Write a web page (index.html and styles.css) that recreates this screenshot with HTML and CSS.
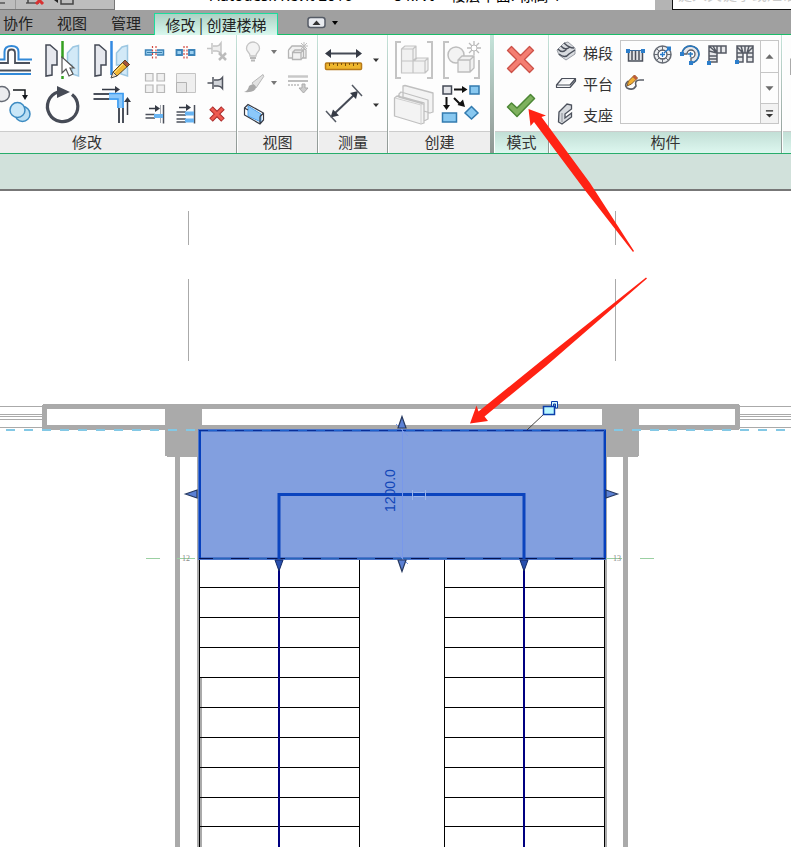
FILE: index.html
```
<!DOCTYPE html>
<html lang="zh-CN">
<head>
<meta charset="utf-8">
<title>Autodesk Revit 2016</title>
<link rel="stylesheet" href="styles.css">
</head>
<body>
<div class="app">
  <header class="titlebar">
    <div class="quick">
      <svg width="114" height="10" viewBox="0 0 114 10" aria-hidden="true">
        <path d="M0 3H5M26 3H39" stroke="#555" stroke-width="1.5"/><path d="M15.500 0V9" stroke="#999"/>
        <path d="M28 0V3M61 0V4H73V0" fill="none" stroke="#444" stroke-width="1.500"/>
        <path d="M36 4L43 -3M36 -3L43 4" stroke="#d83232" stroke-width="3"/>
        <path d="M54 0L58 3V-3Z" fill="#222"/>
      </svg>
    </div>
    <div class="caption"><span>Autodesk Revit 2016 -</span><span>84.rvt -</span><span>楼层平面: 标高 1</span></div>
    <div class="search"><span>键入关键字或短语</span></div>
  </header>

  <nav class="tabs">
    <button class="tab">协作</button>
    <button class="tab">视图</button>
    <button class="tab">管理</button>
    <button class="tab active">修改 | 创建楼梯</button>
    <button class="collapse" aria-label="最小化功能区">
      <svg width="32" height="14" viewBox="0 0 32 14"><rect x="1" y="1.500" width="17" height="10" rx="2.500" fill="#e9ebf0" stroke="#555b66" stroke-width="1.500"/><path d="M5.500 9L9.500 4.500L13.500 9Z" fill="#333"/><path d="M25 5H31L28 9Z" fill="#000"/></svg>
    </button>
  </nav>

  <div class="ribbon">
    <section class="panel modify">
      <div class="body">
        <div class="grid modify-large">
          <button aria-label="偏移"><svg viewBox="0 37 38 46"><g fill="none" stroke-width="2"><path d="M0 59.500H4.500V52Q4.500 46 11.500 46T18.500 52V59.500H32M0 74H31" stroke="#3289d8"/><path d="M0 63H8V53Q8 49.500 11.500 49.500T15 53V63H30M0 70.500H31" stroke="#4b505b" stroke-width="1.800"/></g></svg></button>
          <button aria-label="镜像 - 拾取轴"><svg viewBox="38 37 49 46"><path d="M46 45H50L57 51V65H52V75L46 76Z" fill="#e6e8ee" stroke="#444955" stroke-width="1.500"/><path d="M78.500 45.500L73 47L67.500 53V65H72V74L78.500 76Z" fill="#d2e9f7" stroke="#9cc7e2" stroke-width="1.500"/><path d="M62.500 41V58M62.500 76V79" stroke="#35a020" stroke-width="2.500"/><path d="M62 57V73L66 69L69 76L73 74L70 68H74Z" fill="#fff" stroke="#555" stroke-width="1.200"/></svg></button>
          <button aria-label="镜像 - 绘制轴"><svg viewBox="87 37 49 46"><path d="M95 45H99L106 51V65H101V75L95 76Z" fill="#e6e8ee" stroke="#444955" stroke-width="1.500"/><path d="M127.500 45.500L122 47L116.500 53V65H121V74L127.500 76Z" fill="#d2e9f7" stroke="#9cc7e2" stroke-width="1.500"/><path d="M111.500 41V75" stroke="#3289e2" stroke-width="2.500"/><path d="M113 72L125 60L129.500 64.500L117 76Z" fill="#f2b733" stroke="#5b4628"/><path d="M114 73L125 62" stroke="#fadf8c"/><path d="M125 60L129.500 64.500L127 67L122.500 62.500Z" fill="#a5523a" stroke="#5b4628"/><path d="M111 78L113 72L117 76Z" fill="#f4dfc0" stroke="#4b4b4b"/></svg></button>
          <button aria-label="复制"><svg viewBox="0 83 38 46"><circle cx="2" cy="94" r="7.500" fill="#ebecef" stroke="#666b75" stroke-width="1.500"/><path d="M13 90H25V95" fill="none" stroke="#15181d" stroke-width="1.500"/><path d="M22 95H28L25 100Z" fill="#15181d"/><circle cx="22.500" cy="114" r="7.500" fill="#b9def3" stroke="#3c8bc2" stroke-width="1.500"/><circle cx="17.500" cy="110" r="7.500" fill="#c9e7f8" stroke="#3c8bc2" stroke-width="1.500"/></svg></button>
          <button aria-label="旋转"><svg viewBox="38 83 49 46"><path d="M58 92A15.200 15.200 0 1 0 72 94.500" fill="none" stroke="#464b56" stroke-width="3.200"/><path d="M57 86L70 92L57 98Z" fill="#464b56"/></svg></button>
          <button aria-label="修剪/延伸为角"><svg viewBox="87 83 49 46"><path d="M93.500 94H110M93.500 99H110M119 107V123M123 107V123" stroke="#4b505b" stroke-width="2"/><path d="M109 96.500H120.500V108" fill="none" stroke="#8cc8fa" stroke-width="7"/><path d="M109 93.500H123V108M109 99H118V108" fill="none" stroke="#3d9aef" stroke-width="1.500"/><path d="M102 89.500H117M127.500 115V101" stroke="#353a45" stroke-width="1.500"/><path d="M115 86L120 89.500L115 93ZM124 102L127.500 97L131 102Z" fill="#353a45"/></svg></button>
        </div>
        <div class="grid modify-small">
          <button aria-label="拆分图元"><svg viewBox="139 37 31 31"><path d="M145.500 50H163.500V55H145.500Z" fill="#9dd0f0" stroke="#3b83b8" stroke-width="1.500"/><path d="M154.500 45V60" stroke="#fff" stroke-width="5"/><path d="M147 52.500H162" stroke="#397da9"/><path d="M152.500 46V59M156 46V59" stroke="#d24a40" stroke-width="1.200" stroke-dasharray="2 1.500"/></svg></button>
          <button aria-label="用间隙拆分"><svg viewBox="170 37 31 31"><path d="M176.500 50H182V55H176.500ZM189 50H194.500V55H189Z" fill="#9dd0f0" stroke="#3b83b8" stroke-width="1.800"/><path d="M184 46V59M187 46V59" stroke="#d24a40" stroke-width="1.200" stroke-dasharray="2 1.500"/></svg></button>
          <button aria-label="解锁" disabled><svg viewBox="201 37 31 31"><path d="M207 48.500H212M212 43V54M213 46H217Q219 46 221 43V54Q219 51 217 51H213" fill="#eee" stroke="#c4c4c4" stroke-width="1.500"/><path d="M219 53L226 60M226 53L219 60" stroke="#bbb" stroke-width="2.500"/></svg></button>
          <button aria-label="阵列" disabled><svg viewBox="139 68 31 31"><path d="M145.500 73.500H153V81H145.500ZM157 73.500H164.500V81H157ZM145.500 85H153V92.500H145.500ZM157 85H164.500V92.500H157Z" fill="#f0f0f0" stroke="#b8b8b8" stroke-width="1.200"/></svg></button>
          <button aria-label="缩放" disabled><svg viewBox="170 68 31 31"><path d="M176.500 73.500H195.500V92.500H176.500Z" fill="#efefef" stroke="#c4c4c4"/><path d="M176.500 82.500H186.500V92.500H176.500Z" fill="#e7e7e7" stroke="#b3b3b3"/></svg></button>
          <button aria-label="锁定"><svg viewBox="201 68 31 31"><path d="M207.500 83H213M213 77V89M214 80H218Q220.500 80 222.500 77.500V88.500Q220.500 86 218 86H214" fill="#d2d5da" stroke="#50545e" stroke-width="1.500"/></svg></button>
          <button aria-label="修剪/延伸单个图元"><svg viewBox="139 99 31 31"><path d="M145.500 114.500H155M145.500 118H155M163.500 105V123.500" stroke="#4b505b" stroke-width="1.500"/><path d="M160.500 105V123" stroke="#a5a9b0"/><path d="M154 116H163" stroke="#68b4f2" stroke-width="4"/><path d="M149 108.500H157" stroke="#353a45" stroke-width="1.500"/><path d="M155 105L160 108.500L155 112Z" fill="#353a45"/></svg></button>
          <button aria-label="修剪/延伸多个图元"><svg viewBox="170 99 31 31"><path d="M176.500 112H186M176.500 115H186M176.500 119H186M176.500 122H186M194.500 105V123.500" stroke="#4b505b" stroke-width="1.500"/><path d="M185 113.500H194M185 120.500H194" stroke="#68b4f2" stroke-width="4"/><path d="M179 107.500H188" stroke="#353a45" stroke-width="1.500"/><path d="M186 104L191 107.500L186 111Z" fill="#353a45"/></svg></button>
          <button aria-label="删除"><svg viewBox="201 99 31 31"><path d="M211 108L223 120M223 108L211 120" stroke="#a92929" stroke-width="5"/><path d="M211.500 108.500L222.500 119.500M222.500 108.500L211.500 119.500" stroke="#ee5a50" stroke-width="3"/></svg></button>
        </div>
      </div>
      <h2>修改</h2>
    </section>
    <div class="sep"></div>

    <section class="panel view">
      <div class="body">
        <div class="grid view-grid">
          <button aria-label="隐藏" disabled><svg viewBox="238 37 28 31"><path d="M250 56C250 52 246.500 52 246.500 48.500A6.500 6.500 0 0 1 259.500 48.500C259.500 52 256 52 256 56Z" fill="#f3f3f3" stroke="#c5c5c5" stroke-width="1.300"/><path d="M250 58H256M251 60.500H255" stroke="#b8b8b8" stroke-width="2"/></svg></button>
          <button aria-label="隐藏选项" class="drop" disabled><svg viewBox="266 37 16 31"><path d="M271 50H277L274 54Z" fill="#777"/></svg></button>
          <button aria-label="置换" disabled><svg viewBox="282 37 35 31"><path d="M288.500 50L292 46H301L306 50V58H302M288.500 50V58H292M292.500 52.500H301V59.500H292.500ZM292.500 52.500L295 50H303.500L301 52.500M303.500 50V57L301 59.500" fill="#f2f2f2" stroke="#b5b5b5" stroke-width="1.300"/><path d="M304 42V50M300 46H308M301 43L307 49M307 43L301 49" stroke="#bdbdbd"/></svg></button>
          <button aria-label="替换视图中的图形" disabled><svg viewBox="238 68 28 31"><path d="M252 83L263 74.500Q265 76 262 79L256 88Z" fill="#e2e2e2" stroke="#b8b8b8"/><path d="M244 92Q248 91 249 86Q254 82 256 87Q256 93 244 92Z" fill="#a9a9a9"/></svg></button>
          <button aria-label="替换选项" class="drop" disabled><svg viewBox="266 68 16 31"><path d="M271 81H277L274 85Z" fill="#777"/></svg></button>
          <button aria-label="线处理" disabled><svg viewBox="282 68 35 31"><path d="M288 76.500H308" stroke="#c8c8c8" stroke-width="2.500"/><path d="M288 81H308" stroke="#a8a8a8" stroke-width="1.500"/><path d="M288 85H300" stroke="#999" stroke-dasharray="2 1"/><path d="M302 84H305V88H308L303.500 93L299 88H302Z" fill="#ccc" stroke="#aaa"/></svg></button>
          <button aria-label="选择框"><svg viewBox="238 99 28 31"><path d="M248 106L261 114V122L248 116Z" fill="#8cc8fa" stroke="#4fa2ec"/><path d="M244.500 108L248 104.500L263.500 113V120L260 124L244.500 115ZM260 116.500V124M260 116.500L263.500 113M244.500 108L248 110" fill="none" stroke="#343944" stroke-width="1.200"/></svg></button>
        </div>
      </div>
      <h2>视图</h2>
    </section>
    <div class="sep"></div>

    <section class="panel measure">
      <div class="body">
        <div class="grid measure-grid">
          <button aria-label="测量"><svg viewBox="319 37 49 46"><path d="M329 53.500H358" stroke="#454a55" stroke-width="2"/><path d="M325 53.500L331 49V58ZM362 53.500L356 49V58Z" fill="#353a45"/><rect x="325.500" y="63" width="36" height="6.500" rx="1" fill="#efb62d" stroke="#b77a1a" stroke-width="1.500"/><path d="M329.500 63V66M333.500 63V65M337.500 63V66M341.500 63V65M345.500 63V66M349.500 63V65M353.500 63V66M357.500 63V65" stroke="#78500c"/></svg></button>
          <button aria-label="测量选项" class="drop"><svg viewBox="368 37 19 46"><path d="M373 58.500H379L376 62Z" fill="#333"/></svg></button>
          <button aria-label="对齐尺寸标注"><svg viewBox="319 83 49 46"><path d="M334 114L354 95" stroke="#454a55" stroke-width="2"/><path d="M330.500 117.500L333 109.500L339 115.500ZM358 91L350 93L356 99Z" fill="#353a45"/><path d="M326 111L336 122M352 85L362 96" stroke="#555a64" stroke-width="1.500"/></svg></button>
          <button aria-label="标注选项" class="drop"><svg viewBox="368 83 19 46"><path d="M373 103.500H379L376 107Z" fill="#333"/></svg></button>
        </div>
      </div>
      <h2>测量</h2>
    </section>
    <div class="sep"></div>

    <section class="panel create">
      <div class="body">
        <div class="grid create-grid">
          <button aria-label="创建组" disabled><svg viewBox="389 37 49 46"><path d="M401 42H396V78H401M427 42H432V78H427" fill="none" stroke="#c4c4c4" stroke-width="2"/><path d="M401.500 61V49L405 46H416V58L413 61H425V61L428 58L417 58L414 61M401.500 61V73H425V61ZM401.500 49H413V61M413 49L416 46M413 61V73M425 61L428 58V70L425 73" fill="#f1f1f1" stroke="#c4c4c4" stroke-width="1.200" stroke-linejoin="round"/></svg></button>
          <button aria-label="创建零件" disabled><svg viewBox="438 37 52 46"><path d="M449 42H444V78H449M474 78H479V60" fill="none" stroke="#c4c4c4" stroke-width="2"/><circle cx="456" cy="55" r="8" fill="#f3f3f3" stroke="#bdbdbd" stroke-width="1.500"/><path d="M458 60L462 56H474V68L470 72H458ZM458 60H470V72M470 60L474 56" fill="#f1f1f1" stroke="#bdbdbd" stroke-width="1.300"/><path d="M474 41V55M467 48H481M469 43L479 53M479 43L469 53" stroke="#bababa" stroke-width="1.300"/><circle cx="474" cy="48" r="3" fill="#fff" stroke="#bbb"/></svg></button>
          <button aria-label="创建类似" disabled><svg viewBox="389 83 49 46"><path d="M403 89V86L405 85.500L433 93V112L430 113L424 111V103L403 97ZM399 94L401 92L428 100V119L424 121V104L399 97ZM394.500 98L397 96L424 103V123L421 124L394.500 116Z" fill="#f3f3f3" stroke="#c0c0c0" stroke-width="1.300" stroke-linejoin="round"/><path d="M395 98L421 105V123M421 105L424 103" fill="none" stroke="#d0d0d0"/></svg></button>
          <button aria-label="创建部件"><svg viewBox="438 83 52 46"><path d="M443 86H451.500V94H443Z" fill="#e3e4e8" stroke="#444955" stroke-width="1.500"/><path d="M470 86H479V94H470ZM442.500 113H456.500V122H442.500ZM471.500 106.500L478 113L471.500 119L465 113Z" fill="#88c8f0" stroke="#337baf" stroke-width="1.500"/><path d="M454 89.500H464M446.500 97V106M454 98L460 104" stroke="#111" stroke-width="2"/><path d="M462 86L467.500 89.500L462 93ZM443 105H450L446.500 110ZM465 107L457.500 105L463 99.500Z" fill="#111"/></svg></button>
        </div>
      </div>
      <h2>创建</h2>
    </section>
    <div class="sep wide"></div>

    <section class="panel mode context">
      <div class="body">
        <div class="grid mode-grid">
          <button aria-label="取消编辑模式"><svg viewBox="495 37 53 46"><path d="M507.500 50.500L511.500 46.500L520.500 55.500L529.500 46.500L533.500 50.500L524.500 59.500L533.500 68.500L529.500 72.500L520.500 63.500L511.500 72.500L507.500 68.500L516.500 59.500Z" fill="#f47e72" stroke="#cc5148" stroke-width="1.300" stroke-linejoin="round"/></svg></button>
          <button aria-label="完成编辑模式"><svg viewBox="495 83 53 46"><path d="M507.500 107L511.500 103L517 108L530.500 94.500L534.500 98.500L517 116.500Z" fill="#7fb15e" stroke="#4c8735" stroke-width="1.500" stroke-linejoin="round"/></svg></button>
        </div>
      </div>
      <h2>模式</h2>
    </section>
    <div class="sep"></div>

    <section class="panel component context">
      <div class="body">
        <div class="parts">
          <button class="part"><svg viewBox="555 37 23 31"><path d="M564 43L568 42L575 48V54L566 60L559 55L557 50L560 47Z" fill="#d9dce0" stroke="#9a9ea5"/><path d="M558 49Q562 54 567 49M561 46Q565 51 570 47M564 43Q569 48 574 48M559 54Q565 59 569 54L575 50" fill="none" stroke="#4b505b" stroke-width="1.400"/></svg><span>梯段</span></button>
          <button class="part"><svg viewBox="555 68 23 31"><path d="M556.500 85L562 78.500H575.500V81L570 87.500H556.500ZM556.500 85H570L575.500 78.500" fill="#f3f4f6" stroke="#4b505b" stroke-width="1.200" stroke-linejoin="round"/></svg><span>平台</span></button>
          <button class="part"><svg viewBox="555 99 23 31"><path d="M559 112L567 104L571.500 105V109L565 114V118L571.500 113V117L562 124L558.500 122Z" fill="#d7dade" stroke="#4b505b" stroke-width="1.300"/><path d="M562 113V122" fill="none" stroke="#8a8e95"/></svg><span>支座</span></button>
        </div>
        <div class="gallery">
          <div class="shapes">
            <button aria-label="直梯"><svg viewBox="621 41 27 29"><path d="M628.500 50V61H642.500V50M632 51V60M635.500 51V60M639 51V60" fill="#e3e5e8" stroke="#4b505b" stroke-width="1.500"/><path d="M628 50.500H643" stroke="#3a6c9e"/><path d="M626 49H630V53H626ZM641 49H645V53H641Z" fill="#2c7ecb"/></svg></button>
            <button aria-label="全踏步螺旋"><svg viewBox="648 41 27 29"><circle cx="662.500" cy="54.500" r="8.500" fill="#eceef0" stroke="#666b74" stroke-width="1.500"/><circle cx="662.500" cy="54.500" r="4.500" fill="#fff" stroke="#555a64" stroke-width="1.300"/><path d="M662.500 46V51M662.500 58V63M654 54.500H658M667 54.500H671M656.500 48.500L659.500 51.500M656.500 60.500L659.500 57.500M668.500 60.500L665.500 57.500" stroke="#666b74"/><path d="M662.500 52V57M660 54.500H665M664 53L669 48.500" stroke="#267ac9" stroke-width="1.300"/><path d="M667 46.500H671V50.500H667Z" fill="#2c7ecb"/></svg></button>
            <button aria-label="圆心-端点螺旋"><svg viewBox="675 41 27 29"><path d="M682 54A8.500 8.500 0 1 1 691 63V58A4 4 0 1 0 687 54Z" fill="#e4e6ea" stroke="#555a64" stroke-width="1.300"/><path d="M682 54Q683 46 690.500 46Q699 47 699 54.500Q698 62 691 63M688 54H693M690.500 52V57" fill="none" stroke="#2777bd" stroke-width="1.500"/><path d="M680 52H684V56H680ZM689 61H693V65H689Z" fill="#2c7ecb"/></svg></button>
            <button aria-label="L 形转角"><svg viewBox="702 41 27 29"><path d="M709 46H726V53H717V62H709ZM717 53L709 46M713 46L717 53M717 46V53M721 46V53M709 51L717 53M709 56H717M709 59H717" fill="#e7e8eb" stroke="#555a64" stroke-width="1.500"/><path d="M707 61H711V65H707Z" fill="#2c7ecb"/></svg></button>
            <button aria-label="U 形转角"><svg viewBox="729 41 30 29"><path d="M737 46H753V62H747V53H743V62H737ZM743 53L737 47M747 53L753 47M745 46V53M737 53H743M737 57H743M747 53H753M747 57H753M741 46L743 53M749 46L747 53" fill="#e7e8eb" stroke="#555a64" stroke-width="1.500"/><path d="M735 60H739V64H735Z" fill="#2c7ecb"/></svg></button>
            <button aria-label="创建草图"><svg viewBox="621 70 27 29"><path d="M628 81Q624 85 627 88Q633 91 636 86Q634 80 640 80H644" fill="none" stroke="#5b5f68" stroke-width="1.600"/><path d="M627 86L628.500 81L634.500 75L637.500 78L631.500 84Z" fill="#f2af32" stroke="#8a5c24"/><path d="M634.500 75L637.500 78L636 80L632.500 77Z" fill="#bc5a3d"/></svg></button>
          </div>
          <div class="scroll">
            <button aria-label="上一行"><svg viewBox="0 0 19 10"><path d="M5 7H14L9.500 2Z" fill="#6c6c6c"/></svg></button>
            <button aria-label="下一行"><svg viewBox="0 0 19 10"><path d="M5 3H14L9.500 8Z" fill="#6c6c6c"/></svg></button>
            <button aria-label="展开"><svg viewBox="0 0 19 10"><path d="M5.500 1.500H13.500" stroke="#333" stroke-width="1.500"/><path d="M5.500 5H13.500L9.500 9Z" fill="#333"/></svg></button>
          </div>
        </div>
      </div>
      <h2>构件</h2>
    </section>
    <div class="sep"></div>
    <section class="panel rest context">
      <div class="body"><svg class="edge" viewBox="783 37 8 46"><path d="M791 58.500V75" stroke="#aaa" stroke-width="2"/></svg></div>
      <h2></h2>
    </section>
  </div>

  <div class="options"></div>

  <main class="canvas">
    <svg class="plan" viewBox="0 191 791 656" preserveAspectRatio="xMinYMin slice" role="img" aria-label="楼梯平面">
      <g shape-rendering="crispEdges">
        <path d="M188.500 211V245M188.500 279V361M615.500 211V245M615.500 279V361" stroke="#aaa"/>
        <path d="M0 406.500H42M0 414.500H42M0 416.500H42M0 419.500H42M0 427.500H42M740 406.500H791M740 414.500H791M740 416.500H791M740 419.500H791M740 427.500H791" stroke="#aaa"/>
        <g fill="#aaa">
          <path fill-rule="evenodd" d="M43 404H739V405H740V429H739V430H43V429H42V405H43ZM47 409V425H735V409Z"/>
          <path d="M165 404H202V457H167V456H165ZM602 404H639V455L637 457H602Z"/>
          <path d="M175 457H180V847H175ZM197 457H199V847H197ZM200 677H202V847H200ZM605 457H607V847H605ZM623 457H628V847H623Z"/>
        </g>
        <path d="M6 430H198M614 430H791" stroke="#83c8e5" stroke-width="2" stroke-dasharray="9 9"/>
        <path d="M146 558.500H160M177 558.500H195M605 558.500H622M640 558.500H654" stroke="#9bd0a2"/>
        <g fill="none" stroke="#000">
          <path d="M199.500 560V847M359.500 560V847M444.500 560V847M604.500 560V847"/>
          <path d="M199 587.500H360M199 617.500H360M199 647.500H360M199 677.500H360M199 707.500H360M199 737.500H360M199 767.500H360M199 797.500H360M199 826.500H360"/>
          <path d="M444 587.500H605M444 617.500H605M444 647.500H605M444 677.500H605M444 707.500H605M444 737.500H605M444 767.500H605M444 797.500H605M444 826.500H605"/>
        </g>
        <path d="M279 560V847M524 560V847" stroke="#000080" stroke-width="2"/>
        <rect x="198" y="429" width="408" height="131" fill="#4d75cb"/>
        <rect x="201" y="432" width="402" height="125" fill="#829fdf"/>
        <path d="M199.500 430V559M604.500 430V559" fill="none" stroke="#0640bd" stroke-width="2"/>
        <path d="M199 430.500H605" stroke="#1d62cf"/>
        <path d="M199 430.500H605" stroke="#062e9a" stroke-dasharray="9 9"/>
        <path d="M199 558.500H605" stroke="#2865b9"/>
        <path d="M199 558.500H213M231 558.500H605" stroke="#06144f" stroke-dasharray="18 18"/>
      </g>
      <path d="M279 559V494.500H524V559" fill="none" stroke="#0b44be" stroke-width="3"/>
      <path d="M402.500 424V564M396 424L408 436M396 552L408 564" fill="none" stroke="#7898ea"/>
      <path d="M412.500 490V500M425.500 490V500M414 492.500H424M414 496.500H424" fill="none" stroke="#9db6e9"/>
      <g fill="#5b80d4" stroke="#26385f" stroke-width="1.200">
        <path d="M185.500 494L197 490V498Z"/><path d="M617.500 494L606 490V498Z"/><path d="M402 416.500L398 428H406Z"/><path d="M402 571.500L398 560H406Z"/>
      </g>
      <path d="M279 571L275 560H283ZM524 571L520 560H528Z" fill="#284fae" stroke="#152c66"/>
      <text class="dimension" transform="translate(395 512) rotate(-90)">1200.0</text>
      <text class="level" x="182" y="561">12</text>
      <text class="level" x="613" y="561">13</text>
      <path d="M527 430L544 414" stroke="#444"/>
      <path d="M551.500 406V401.500H557.500V408H555.500V404H553.500V406" fill="#d9fbff" stroke="#0b3fab"/>
      <rect x="543.500" y="406.500" width="11" height="8" fill="#b9f7ff" stroke="#0b3fab" stroke-width="1.500"/>
    </svg>
  </main>

  <svg class="pointers" viewBox="0 0 791 847" preserveAspectRatio="xMinYMin slice" aria-hidden="true">
    <path d="M528.500 109L546 115.500L541.500 117L590 183L634 251L633 252L584 189L534 122L530.500 126Z" fill="#ff2213"/>
    <path d="M470 423.500L476.500 405.500L478.500 411.500L541 361L646 277.500L647 278.500L546 366L484.500 416.500L488 421Z" fill="#ff2213"/>
  </svg>
</div>
</body>
</html>
```
FILE: styles.css
```
* { box-sizing: border-box; }

body {
  margin: 0;
  background: #fff;
  color: #333;
  font: 15px/20px "Noto Sans CJK SC", sans-serif;
}

button {
  margin: 0;
  padding: 0;
  border: 0;
  background: none;
  color: inherit;
  font: inherit;
}

svg { display: block; }

.app { position: relative; overflow: hidden; }

.titlebar {
  display: flex;
  height: 10px;
  overflow: hidden;
  background: #b4b4b4;
}
.quick {
  flex: none;
  width: 115px;
  background: #bdbdbd;
  border-right: 1px solid #777;
  border-bottom: 1px solid #777;
}
.caption {
  flex: 1;
  display: flex;
  align-items: flex-end;
  gap: 32px;
  padding: 0 0 5px 95px;
  background: #fff;
  color: #000;
  font-family: "Noto Sans", "Noto Sans CJK SC", sans-serif;
  white-space: nowrap;
}
.caption span:last-child { margin-left: -24px; }
.search {
  flex: none;
  display: flex;
  align-items: flex-end;
  width: 119px;
  margin-left: 17px;
  padding: 0 0 5px 4px;
  background: #fff;
  border: solid #111;
  border-width: 0 0 1px 1px;
  color: #ccc;
  white-space: nowrap;
}

.tabs {
  display: flex;
  align-items: flex-end;
  height: 25px;
  background: #a0a0a0;
  border-bottom: 1px solid #19bd69;
}
.tab {
  flex: none;
  width: 54px;
  height: 22px;
  padding-right: 6px;
  line-height: 20px;
  color: #222;
}
.tab:first-child { width: 48px; padding-right: 12px; }
.tab:nth-child(3) { width: 52px; padding-right: 4px; }
.tab.active {
  width: 124px;
  margin-bottom: -1px;
  padding: 0;
  border: 1px solid #1ddc9c;
  border-bottom: 0;
  background: linear-gradient(#acd1c4, #d9f8ee);
}
.collapse { margin: 0 0 4px 29px; }

.ribbon {
  display: flex;
  height: 119px;
  background: #fdfdfd;
  border-bottom: 1px solid #27ad6b;
}
.panel {
  flex: none;
  display: flex;
  flex-direction: column;
}
.body {
  flex: 1;
  display: flex;
  padding-top: 2px;
}
.panel h2 {
  height: 22px;
  margin: 0;
  border-top: 1px solid #ccc;
  background: #eee;
  font-size: 15px;
  font-weight: 400;
  line-height: 19px;
  text-align: center;
}
.context h2 { background: linear-gradient(#c2dfd6, #ddf7ef); }
.modify { width: 236px; }
.modify h2 { padding-right: 62px; }
.view { width: 79px; }
.measure { width: 68px; }
.create { width: 101px; }
.mode { width: 53px; }
.component { width: 231px; }
.rest { flex: 1; }
.edge { width: 8px; height: 46px; }

.sep {
  flex: none;
  width: 2px;
  background: linear-gradient(#c5e4da, #8f9693);
  border-right: 1px solid #fff;
}
.sep.wide { width: 5px; }

.grid { display: grid; }
.grid svg { width: 100%; height: 100%; }
.modify-large { grid: 46px 46px / 38px 49px 49px; }
.modify-small { grid: repeat(3, 31px) / repeat(3, 31px); margin-left: 3px; }
.view-grid { grid: repeat(3, 31px) / 28px 16px 35px; }
.measure-grid { grid: 46px 46px / 49px 19px; }
.create-grid { grid: 46px 46px / 49px 52px; }
.mode-grid { grid: 46px 46px / 53px; }

.parts {
  width: 70px;
  padding-left: 5px;
}
.part {
  display: flex;
  align-items: center;
  gap: 5px;
  height: 31px;
}
.part svg { width: 23px; height: 31px; }

.gallery {
  display: flex;
  width: 159px;
  height: 84px;
  margin-top: 3px;
  border: 1px solid #c6c6c6;
}
.shapes {
  flex: 1;
  display: grid;
  grid-template-columns: repeat(5, 27px);
  grid-auto-rows: 29px;
}
.shapes svg { width: 27px; height: 29px; }
.shapes button:nth-child(5) svg { width: 30px; }
.scroll {
  display: grid;
  grid-template-rows: 31px 31px 20px;
  width: 18px;
  border-left: 1px solid #c6c6c6;
}
.scroll button + button { border-top: 1px solid #c6c6c6; }
.scroll button:last-child { background: #f2f2f2; }
.scroll svg { width: 17px; height: 10px; }

.options {
  height: 37px;
  background: #d1e1db;
  border-bottom: 2px solid #777;
}

.plan { width: 100%; height: 656px; }
.dimension {
  fill: #1146b8;
  font: 14px "Liberation Sans", sans-serif;
}
.level {
  fill: #888;
  font: 8px "Liberation Serif", serif;
}

.pointers {
  position: absolute;
  top: 0;
  left: 0;
  width: 100%;
  height: 847px;
  pointer-events: none;
}
```
